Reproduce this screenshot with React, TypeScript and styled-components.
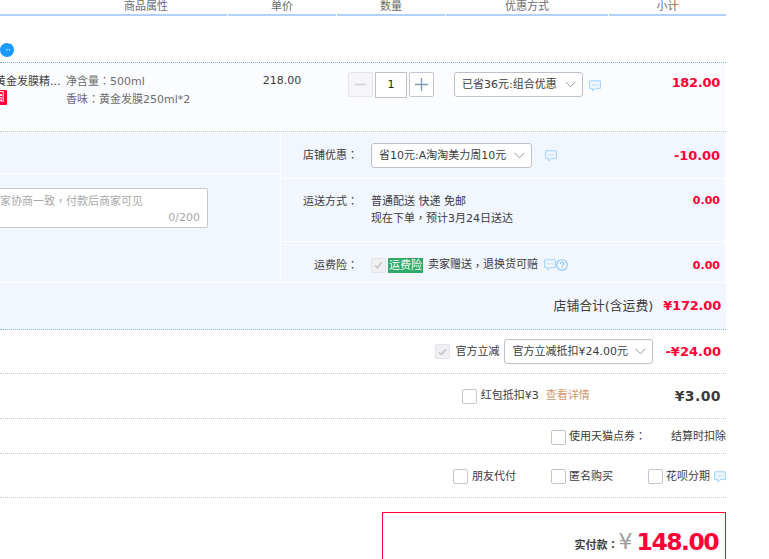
import React from "react";
import styled, { createGlobalStyle } from "styled-components";

const Global = createGlobalStyle`
  html, body { margin: 0; padding: 0; background: #fff; overflow: hidden; }
  * { box-sizing: border-box; }
  body { font: 11px/16px "DejaVu Sans", "Noto Sans CJK SC", sans-serif; color: #3c3c3c; }
`;

const Page = styled.div`
  width: 726px;
  height: 559px;
  overflow: hidden;
`;
const Punct = styled.span`
  font-family: "Noto Sans CJK TC", sans-serif;
  line-height: 0;
`;

const HeaderRow = styled.div`
  display: grid;
  grid-template-columns: 227px 108px 108px 162px 117px;
  column-gap: 1px;
  height: 16px;
`;
const HeaderCell = styled.div<{ $left?: number }>`
  height: 16px;
  border-bottom: 2px solid #b2d1ff;
  color: #6c6c6c;
  line-height: 13px;
  text-align: center;
  padding-left: ${(p) => p.$left ?? 0}px;
`;

const ShopRow = styled.div`
  height: 46px;
  position: relative;
`;
const ShopMark = styled.svg`
  position: absolute;
  left: 0;
  top: 26px;
`;

const ProductRow = styled.div`
  display: grid;
  grid-template-columns: 66px 162px 109px 109px 163px 117px;
  height: 70px;
  border-top: 1px dotted #80b2ff;
  border-bottom: 1px dotted #c4c4c4;
  background: #fbfcff;
  padding-top: 9px;
`;
const NameCell = styled.div`
  overflow: hidden;
  white-space: nowrap;
`;
const NameLine = styled.div`
  margin-left: -5px;
  line-height: 18px;
  padding-top: 1px;
`;
const RedTag = styled.span`
  display: block;
  width: 15px;
  height: 15px;
  margin: -1px 0 0 -8px;
  background: #ff0036;
  border-radius: 1px;
  color: #fff;
  text-align: center;
  line-height: 15px;
`;
const AttrCell = styled.div`
  color: #6c6c6c;
  line-height: 18px;
  white-space: nowrap;
  padding-top: 1px;
`;
const PriceCell = styled.div`
  text-align: center;
  line-height: 17px;
  padding-right: 1px;
`;
const StepperCell = styled.div`
  display: flex;
  align-items: flex-start;
  gap: 2px;
  padding-left: 11px;
`;
const StepButton = styled.div<{ $off?: boolean }>`
  display: flex;
  align-items: center;
  justify-content: center;
  width: 25px;
  height: 25px;
  border: 1px solid ${(p) => (p.$off ? "#e6e6ea" : "#c6c6d2")};
  border-radius: 2px;
  background: ${(p) => (p.$off ? "#f6f6f8" : "#fff")};
`;
const StepValue = styled.div`
  width: 32px;
  height: 26px;
  border: 1px solid #c0c0c8;
  background: #fff;
  text-align: center;
  line-height: 24px;
  color: #222;
`;
const DiscountCell = styled.div`
  display: flex;
  align-items: flex-start;
  gap: 6px;
  padding-left: 8px;
`;
const Select = styled.div<{ $w: number }>`
  display: flex;
  align-items: center;
  justify-content: space-between;
  flex: none;
  width: ${(p) => p.$w}px;
  height: 25px;
  padding: 0 6px 0 7px;
  background: #fff;
  border: 1px solid #c0c0cc;
  border-radius: 3px;
  white-space: nowrap;
`;
const BubbleAt = styled.span<{ $top?: number; $left?: number }>`
  display: inline-flex;
  flex: none;
  margin-top: ${(p) => p.$top ?? 0}px;
  margin-left: ${(p) => p.$left ?? 0}px;
`;
const Amount = styled.div<{ $size?: number; $dark?: boolean; $space?: number; $left?: number; $top?: number }>`
  font-family: "DejaVu Sans", "Noto Sans CJK SC", sans-serif;
  font-weight: 700;
  font-size: ${(p) => p.$size ?? 13}px;
  letter-spacing: ${(p) => p.$space ?? 0}px;
  margin-left: ${(p) => p.$left ?? 0}px;
  margin-top: ${(p) => p.$top ?? 0}px;
  color: ${(p) => (p.$dark ? "#3c3c3c" : "#ff0036")};
  text-align: right;
  white-space: nowrap;
`;
const SubtotalCell = styled(Amount)`
  padding: 2px 6px 0 0;
  line-height: 18px;
`;

const StoreBlock = styled.div`
  display: grid;
  grid-template-columns: 280px 1fr;
  column-gap: 1px;
  margin-top: 1px;
  width: 725px;
`;
const LeftPanel = styled.div`
  display: flex;
  flex-direction: column;
  gap: 1px;
`;
const LeftTop = styled.div`
  height: 40px;
  background: #f2f6ff;
`;
const LeftBottom = styled.div`
  height: 108px;
  background: #f2f6ff;
  padding-top: 14px;
`;
const NoteBox = styled.div`
  display: flex;
  flex-direction: column;
  width: 212px;
  height: 40px;
  margin-left: -4px;
  padding: 5px 7px 0 3px;
  background: #fff;
  border: 1px solid #c8c8c8;
  border-radius: 2px;
  color: #a8a8a8;
  white-space: nowrap;
`;
const NoteCount = styled.div`
  text-align: right;
  line-height: 16px;
`;
const RightPanel = styled.div`
  display: flex;
  flex-direction: column;
  gap: 1px;
`;
const StoreRow = styled.div<{ $h: number; $pad: number; $mid?: boolean }>`
  display: grid;
  grid-template-columns: 77px 1fr auto;
  column-gap: 13px;
  align-items: ${(p) => (p.$mid ? "center" : "start")};
  height: ${(p) => p.$h}px;
  padding: ${(p) => p.$pad}px 5px 0 0;
  background: #f2f6ff;
`;
const StoreLabel = styled.div`
  margin-top: 1px;
  text-align: right;
  white-space: nowrap;
`;
const StoreValue = styled.div`
  display: flex;
  align-items: center;
  white-space: nowrap;
`;
const ShipText = styled.div`
  line-height: 17px;
  white-space: nowrap;
`;
const GreenTag = styled.span`
  display: inline-block;
  height: 15px;
  padding: 0 1px;
  margin: 0 5px 0 2px;
  background: #2faa66;
  color: #fff;
  line-height: 15px;
`;
const TotalRow = styled.div`
  display: flex;
  align-items: center;
  justify-content: flex-end;
  gap: 10px;
  width: 726px;
  height: 47px;
  margin-top: 1px;
  padding: 0 5px 0 0;
  background: #f2f6ff;
  border-bottom: 1px dotted #80b2ff;
  font-size: 12.8px;
`;
const LineRow = styled.div<{ $h: number; $right?: number; $down?: number }>`
  display: flex;
  align-items: center;
  justify-content: flex-end;
  height: ${(p) => p.$h}px;
  padding: ${(p) => p.$down ?? 0}px ${(p) => p.$right ?? 0}px 0 0;
  border-bottom: 1px dotted #c8c8c8;
  white-space: nowrap;
`;
const Check = styled.span<{ $off?: boolean }>`
  display: inline-flex;
  align-items: center;
  justify-content: center;
  flex: none;
  width: 15px;
  height: 15px;
  border: 1px solid ${(p) => (p.$off ? "#e2e2e8" : "#c4c4d0")};
  border-radius: 2px;
  background: ${(p) => (p.$off ? "#f1f1f4" : "#fff")};
`;
const CheckLabel = styled.span<{ $gap?: number; $after?: number }>`
  margin-left: ${(p) => p.$gap ?? 4}px;
  margin-right: ${(p) => p.$after ?? 0}px;
`;
const LinkText = styled.span`
  color: #d2996f;
  margin-left: 7px;
  margin-right: 85px;
`;
const PayBox = styled.div`
  display: flex;
  align-items: center;
  justify-content: flex-end;
  width: 344px;
  height: 60px;
  margin: 14px 0 0 382px;
  padding: 0 7px 0 0;
  border: 1px solid #ff0036;
  background: #fff;
`;
const PayLabel = styled.span`
  margin-top: 8px;
  margin-right: 0;
  font-weight: 700;
`;
const PayYen = styled.span`
  margin-right: 4px;
  font-size: 22px;
  color: #9c9c9c;
`;
const PayValue = styled.span`
  font-family: "DejaVu Sans", sans-serif;
  font-weight: 700;
  font-size: 23.500px;
  letter-spacing: -1.550px;
  color: #ff0036;
`;

const Bubble = () => (
  <svg width="12" height="12" viewBox="0 0 12 12" fill="none">
    <path d="M1 .8h10a.4.4 0 0 1 .4.4v7a.4.4 0 0 1-.4.4H6.200L3.800 11V8.600H1a.4.4 0 0 1-.4-.4v-7A.4.4 0 0 1 1 .8z" fill="#eef7ff" stroke="#9fd3fb" strokeWidth="1" />
    <path d="M3.400 4.800h1M5.500 4.800h1M7.600 4.800h1" stroke="#9fc8ee" strokeWidth="1" />
  </svg>
);
const Help = () => (
  <svg width="12" height="12" viewBox="0 0 12 12" fill="none">
    <circle cx="6" cy="6" r="5.300" stroke="#8cc8f8" strokeWidth="1.100" />
    <path d="M4.300 4.700c0-2.200 3.400-2.200 3.400 0 0 1.300-1.700 1.300-1.700 2.700" stroke="#8cc8f8" strokeWidth="1.100" />
    <path d="M6 8.300v1.100" stroke="#8cc8f8" strokeWidth="1.100" />
  </svg>
);
const Chevron = () => (
  <svg width="11" height="7" viewBox="0 0 11 7" fill="none">
    <path d="M.7.8l4.800 5 4.800-5" stroke="#9a9aa6" strokeWidth="1" />
  </svg>
);
const Tick = () => (
  <svg width="9" height="8" viewBox="0 0 9 8" fill="none">
    <path d="M1 4.200l2.400 2.400L8 1.200" stroke="#c4c4c8" strokeWidth="1.500" />
  </svg>
);

export default function App() {
  return (
    <Page>
      <Global />
      <HeaderRow>
        <HeaderCell $left={65}>商品属性</HeaderCell>
        <HeaderCell>单价</HeaderCell>
        <HeaderCell>数量</HeaderCell>
        <HeaderCell>优惠方式</HeaderCell>
        <HeaderCell>小计</HeaderCell>
      </HeaderRow>
      <ShopRow>
        <ShopMark width="14" height="15" viewBox="0 0 14 15">
          <path d="M0 8a7 7 0 0 0 14 0c0-3-1.500-5-3.500-6.500C9.500 2.500 8.500 1 7 1 3 1 0 4 0 8z" fill="#1b9aff" />
          <path d="M7 7v1.500M9.500 7v1.500" stroke="#dff1ff" strokeWidth="1" />
        </ShopMark>
      </ShopRow>
      <ProductRow>
        <NameCell>
          <NameLine>黄金发膜精...</NameLine>
          <RedTag>周</RedTag>
        </NameCell>
        <AttrCell>
          净含量<Punct>：</Punct>500ml
          <br />
          香味<Punct>：</Punct>黄金发膜250ml*2
        </AttrCell>
        <PriceCell>218.00</PriceCell>
        <StepperCell>
          <StepButton $off>
            <svg width="11" height="3" viewBox="0 0 11 3"><path d="M0 1.500h11" stroke="#cfcfd4" strokeWidth="1.500" /></svg>
          </StepButton>
          <StepValue>1</StepValue>
          <StepButton>
            <svg width="13" height="13" viewBox="0 0 13 13"><path d="M0 6.500h13M6.500 0v13" stroke="#7f9ab8" strokeWidth="1.300" /></svg>
          </StepButton>
        </StepperCell>
        <DiscountCell>
          <Select $w={129}>已省36元:组合优惠<Chevron /></Select>
          <BubbleAt $top={8}><Bubble /></BubbleAt>
        </DiscountCell>
        <SubtotalCell $space={-0.3}>182.00</SubtotalCell>
      </ProductRow>
      <StoreBlock>
        <LeftPanel>
          <LeftTop />
          <LeftBottom>
            <NoteBox>
              <span>家协商一致<Punct>，</Punct>付款后商家可见</span>
              <NoteCount>0/200</NoteCount>
            </NoteBox>
          </LeftBottom>
        </LeftPanel>
        <RightPanel>
          <StoreRow $h={45} $pad={0} $mid>
            <StoreLabel>店铺优惠<Punct>：</Punct></StoreLabel>
            <StoreValue>
              <Select $w={161}>省10元:A淘淘美力周10元<Chevron /></Select>
              <BubbleAt $left={13}><Bubble /></BubbleAt>
            </StoreValue>
            <Amount $size={13} $space={-0.1} $top={1}>-10.00</Amount>
          </StoreRow>
          <StoreRow $h={62} $pad={14}>
            <StoreLabel>运送方式<Punct>：</Punct></StoreLabel>
            <ShipText>
              普通配送 快递 免邮
              <br />
              现在下单<Punct>，</Punct>预计3月24日送达
            </ShipText>
            <Amount $size={11}>0.00</Amount>
          </StoreRow>
          <StoreRow $h={40} $pad={6} $mid>
            <StoreLabel>运费险<Punct>：</Punct></StoreLabel>
            <StoreValue>
              <Check $off><Tick /></Check>
              <GreenTag>运费险</GreenTag>
              卖家赠送<Punct>，</Punct>退换货可赔
              <BubbleAt $left={6}><Bubble /></BubbleAt>
              <Help />
            </StoreValue>
            <Amount $size={11} $top={1}>0.00</Amount>
          </StoreRow>
        </RightPanel>
      </StoreBlock>
      <TotalRow>
        店铺合计(含运费)
        <Amount $size={13} $space={-0.2}>¥172.00</Amount>
      </TotalRow>
      <LineRow $h={44} $right={5}>
        <Check $off><Tick /></Check>
        <CheckLabel $gap={5} $after={5}>官方立减</CheckLabel>
        <Select $w={149}>官方立减抵扣¥24.00元<Chevron /></Select>
        <Amount $size={13} $left={12}>-¥24.00</Amount>
      </LineRow>
      <LineRow $h={45} $right={5}>
        <Check />
        <CheckLabel>红包抵扣¥3</CheckLabel>
        <LinkText>查看详情</LinkText>
        <Amount $size={14} $dark $space={0.4}>¥3.00</Amount>
      </LineRow>
      <LineRow $h={35} $down={2}>
        <Check />
        <CheckLabel $gap={3} $after={25}>使用天猫点券<Punct>：</Punct></CheckLabel>
        结算时扣除
      </LineRow>
      <LineRow $h={44} $down={2}>
        <Check />
        <CheckLabel $after={35}>朋友代付</CheckLabel>
        <Check />
        <CheckLabel $gap={3} $after={35}>匿名购买</CheckLabel>
        <Check />
        <CheckLabel $gap={3} $after={4}>花呗分期</CheckLabel>
        <Bubble />
      </LineRow>
      <PayBox>
        <PayLabel>实付款<Punct>：</Punct></PayLabel>
        <PayYen>¥</PayYen>
        <PayValue>148.00</PayValue>
      </PayBox>
    </Page>
  );
}
